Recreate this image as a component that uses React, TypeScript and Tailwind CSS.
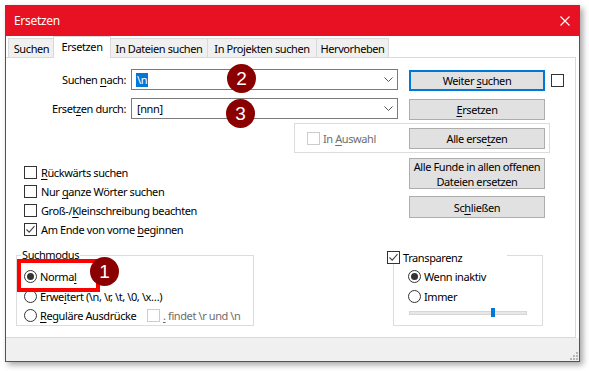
import React from "react";

const U = ({ children }: { children: React.ReactNode }) => (
  <span className="underline underline-offset-2 decoration-1">{children}</span>
);

function Check({ checked = false, disabled = false }: { checked?: boolean; disabled?: boolean }) {
  return (
    <span
      className={
        disabled
          ? "w-[13px] h-[13px] shrink-0 border border-[#cccccc] bg-white flex items-center justify-center"
          : "w-[13px] h-[13px] shrink-0 border border-[#333333] bg-white flex items-center justify-center"
      }
    >
      {checked && (
        <svg width="11" height="11" viewBox="0 0 11 11">
          <path d="M1.5 5.5 L4.2 8.2 L9.5 2.2" fill="none" stroke="#444" strokeWidth="1.1" />
        </svg>
      )}
    </span>
  );
}

function Radio({ checked = false }: { checked?: boolean }) {
  return (
    <span className="w-[13px] h-[13px] shrink-0 rounded-full border border-[#333333] bg-white flex items-center justify-center">
      {checked && <span className="w-[7px] h-[7px] rounded-full bg-[#333333]" />}
    </span>
  );
}

function Combo({ children }: { children: React.ReactNode }) {
  return (
    <div className="ml-[5px] w-[267px] h-[21px] border border-[#7a7a7a] bg-white flex items-center justify-between pl-[4px] pr-[4px]">
      <div className="flex items-center">{children}</div>
      <svg width="9" height="5" viewBox="0 0 9 5">
        <path d="M0.5 0.5 L4.5 4.5 L8.5 0.5" fill="none" stroke="#555" strokeWidth="1" />
      </svg>
    </div>
  );
}

function Btn({ children, cls = "h-[21px]", def = false }: { children: React.ReactNode; cls?: string; def?: boolean }) {
  return (
    <div
      className={
        (def ? "border-2 border-[#0078d7] " : "border border-[#adadad] ") +
        "w-[136px] bg-[#e1e1e1] flex items-center justify-center text-center leading-[15px] " +
        cls
      }
    >
      {children}
    </div>
  );
}

function Badge({ n, cls }: { n: string; cls: string }) {
  return (
    <div
      className={
        "absolute w-[29px] h-[29px] rounded-full bg-[#8a0000] text-white text-[19px] tracking-normal flex items-center justify-center font-['Liberation_Sans',sans-serif] " +
        cls
      }
    >
      {n}
    </div>
  );
}

function Tab({ children, w, active = false }: { children: React.ReactNode; w: string; active?: boolean }) {
  if (active)
    return (
      <div className={"relative z-10 -ml-[2px] -mb-px h-[22px] bg-white border-t border-l border-r border-[#d9d9d9] flex items-center justify-center pb-[2px] " + w}>
        {children}
      </div>
    );
  return (
    <div className={"-ml-px first:ml-0 h-[19px] bg-[#f0f0f0] border-t border-l border-r border-[#d9d9d9] flex items-center justify-center " + w}>
      {children}
    </div>
  );
}

export default function App() {
  return (
    <div className="w-[589px] h-[371px] bg-white pl-[5px] pt-[5px] font-['Noto_Sans',sans-serif] text-[11px] tracking-[-0.4px] leading-none text-black whitespace-nowrap">
      <div className="w-[575px] h-[357px] border border-[#e81123] bg-white flex flex-col shadow-[3px_3px_6px_rgba(0,0,0,0.35)]">
        {/* Title bar */}
        <div className="h-[30px] shrink-0 bg-[#e81123] flex items-center justify-between pl-[8px] pr-[9px] text-white">
          <span className="text-[12px] tracking-[-0.3px]">Ersetzen</span>
          <svg width="10" height="10" viewBox="0 0 10 10">
            <path d="M0.5 0.5 L9.5 9.5 M9.5 0.5 L0.5 9.5" stroke="white" strokeWidth="1.1" />
          </svg>
        </div>

        {/* Tabs */}
        <div className="h-[21px] shrink-0 flex items-end pl-[2px]">
          <Tab w="w-[47px]">Suchen</Tab>
          <Tab w="w-[58px]" active>
            Ersetzen
          </Tab>
          <Tab w="w-[98px]">In Dateien suchen</Tab>
          <Tab w="w-[110px]">In Projekten suchen</Tab>
          <Tab w="w-[73px]">Hervorheben</Tab>
        </div>

        {/* Panel */}
        <div className="relative w-[570px] h-[281px] shrink-0 border-t border-r border-b border-[#d9d9d9] bg-white">
          <div className="mt-[11px] flex items-start">
            <div className="w-[120px] h-[21px] flex items-center justify-end">
              Suchen&nbsp;<U>n</U>ach:
            </div>
            <Combo>
              <span className="bg-[#0078d7] text-white px-[1px] h-[14px] flex items-center">{"\\n"}</span>
            </Combo>
            <div className="ml-[11px] mt-[1px]">
              <Btn def>
                Weiter&nbsp;<U>s</U>uchen
              </Btn>
            </div>
            <div className="ml-[6px] mt-[5px]">
              <Check />
            </div>
          </div>

          <div className="mt-[7px] flex items-start">
            <div className="w-[120px] h-[21px] flex items-center justify-end">
              Erset<U>z</U>en durch:
            </div>
            <Combo>
              <span className="pl-[1px]">[nnn]</span>
            </Combo>
            <div className="ml-[11px] mt-[1px]">
              <Btn>
                <U>E</U>rsetzen
              </Btn>
            </div>
          </div>

          <div className="mt-[3px] ml-[288px] w-[256px] h-[30px] border border-[#dcdcdc] flex items-center pl-[12px]">
            <Check disabled />
            <span className="ml-[3px] text-[#6d6d6d]">
              In <U>A</U>uswahl
            </span>
            <div className="ml-auto mr-[4px]">
              <Btn>
                Alle erse<U>t</U>zen
              </Btn>
            </div>
          </div>

          <div className="mt-[5px] flex items-start">
            <div className="ml-[18px] w-[385px] mt-[5px] flex flex-col">
              <div className="h-[19px] flex items-center gap-[4px]">
                <Check />
                <span>
                  <U>R</U>ückwärts suchen
                </span>
              </div>
              <div className="h-[19px] flex items-center gap-[4px]">
                <Check />
                <span>
                  Nur <U>g</U>anze Wörter suchen
                </span>
              </div>
              <div className="h-[19px] flex items-center gap-[4px]">
                <Check />
                <span>
                  Groß-/<U>K</U>leinschreibung beachten
                </span>
              </div>
              <div className="h-[19px] flex items-center gap-[4px]">
                <Check checked />
                <span>
                  Am Ende von vorne <U>b</U>eginnen
                </span>
              </div>
            </div>
            <div className="flex flex-col">
              <Btn cls="h-[31px]">
                Alle Funde in allen offenen
                <br />
                Dateien ersetzen
              </Btn>
              <div className="mt-[7px]">
                <Btn cls="h-[22px]">
                  Sc<U>h</U>ließen
                </Btn>
              </div>
            </div>
          </div>

          <div className="mt-[16px] flex items-start">
            {/* Suchmodus */}
            <div className="relative ml-[10px] w-[238px] h-[71px] border border-[#dcdcdc] pt-[11px] pl-[7px]">
              <span className="absolute left-[4px] top-[-8px] bg-white px-[1px] leading-[14px]">Suchmodus</span>
              <div className="h-[19.5px] flex items-center gap-[3px]">
                <Radio checked />
                <span>
                  Norma<U>l</U>
                </span>
              </div>
              <div className="h-[19.5px] flex items-center gap-[3px]">
                <Radio />
                <span>
                  Erwe<U>i</U>tert {"(\\n, \\r, \\t, \\0, \\x…)"}
                </span>
              </div>
              <div className="h-[19.5px] flex items-center">
                <Radio />
                <span className="ml-[3px] w-[107px]">
                  <U>R</U>eguläre Ausdrücke
                </span>
                <Check disabled />
                <span className="ml-[3px] text-[#6d6d6d]">
                  <U>.</U> {"findet \\r und \\n"}
                </span>
              </div>
              <div className="absolute left-0 top-[3px] w-[83px] h-[33px] border-[4px] border-[#ff0000]" />
              <Badge n="1" cls="left-[73px] top-[1px]" />
            </div>

            {/* Transparenz */}
            <div className="relative ml-[139px] w-[150px] h-[71px] border border-[#dcdcdc] pt-[11px] pl-[14px]">
              <div className="absolute left-[-7px] top-[-5px] w-[120px] h-[13px] bg-white flex items-center gap-[3px]">
                <Check checked />
                <span>Transparenz</span>
              </div>
              <div className="h-[19.5px] flex items-center gap-[3px]">
                <Radio checked />
                <span>Wenn inaktiv</span>
              </div>
              <div className="h-[19.5px] flex items-center gap-[3px]">
                <Radio />
                <span>Immer</span>
              </div>
              <div className="relative ml-[1px] mt-[2px] w-[118px] h-[9px]">
                <div className="absolute left-0 top-[3px] w-[118px] h-[4px] bg-[#e7e7e7] border border-[#d6d6d6]" />
                <div className="absolute left-[82px] top-0 w-[4px] h-[9px] bg-[#0078d7]" />
              </div>
            </div>
          </div>

          <Badge n="2" cls="left-[221px] top-[6px]" />
          <Badge n="3" cls="left-[220px] top-[41px]" />
        </div>

        {/* Status strip with grip */}
        <div className="flex-1 bg-[#f0f0f0] flex items-end justify-end pr-[1px] pb-[1px]">
          <svg width="8" height="8" viewBox="0 0 8 8">
            <rect x="6" y="0" width="2" height="2" fill="#b5b5b5" />
            <rect x="3" y="3" width="2" height="2" fill="#b5b5b5" />
            <rect x="6" y="3" width="2" height="2" fill="#b5b5b5" />
            <rect x="0" y="6" width="2" height="2" fill="#b5b5b5" />
            <rect x="3" y="6" width="2" height="2" fill="#b5b5b5" />
            <rect x="6" y="6" width="2" height="2" fill="#b5b5b5" />
          </svg>
        </div>
      </div>
    </div>
  );
}
